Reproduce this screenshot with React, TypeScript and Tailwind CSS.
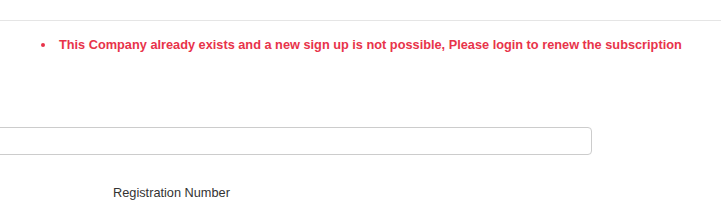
export default function App() {
  return (
    <div className="w-[721px] h-[206px] bg-white overflow-hidden font-['Liberation_Sans',Arial,sans-serif] text-[12.75px] text-[#333]">
      <div className="h-[21px] border-b border-[#e5e5e5]" />
      <ul className="list-disc pl-[56px] pt-[15px] text-[#e8334a] font-bold marker:text-[#e8334a]">
        <li className="pl-[3px] leading-[18px]">
          This Company already exists and a new sign up is not possible, Please login to renew the subscription
        </li>
      </ul>
      <div className="mt-[73px] ml-[-10px] w-[602px] h-[28px] border border-[#ccc] rounded-[4px] bg-white" />
      <div className="mt-[30px] pl-[113px] leading-[16px]">Registration Number</div>
    </div>
  );
}
